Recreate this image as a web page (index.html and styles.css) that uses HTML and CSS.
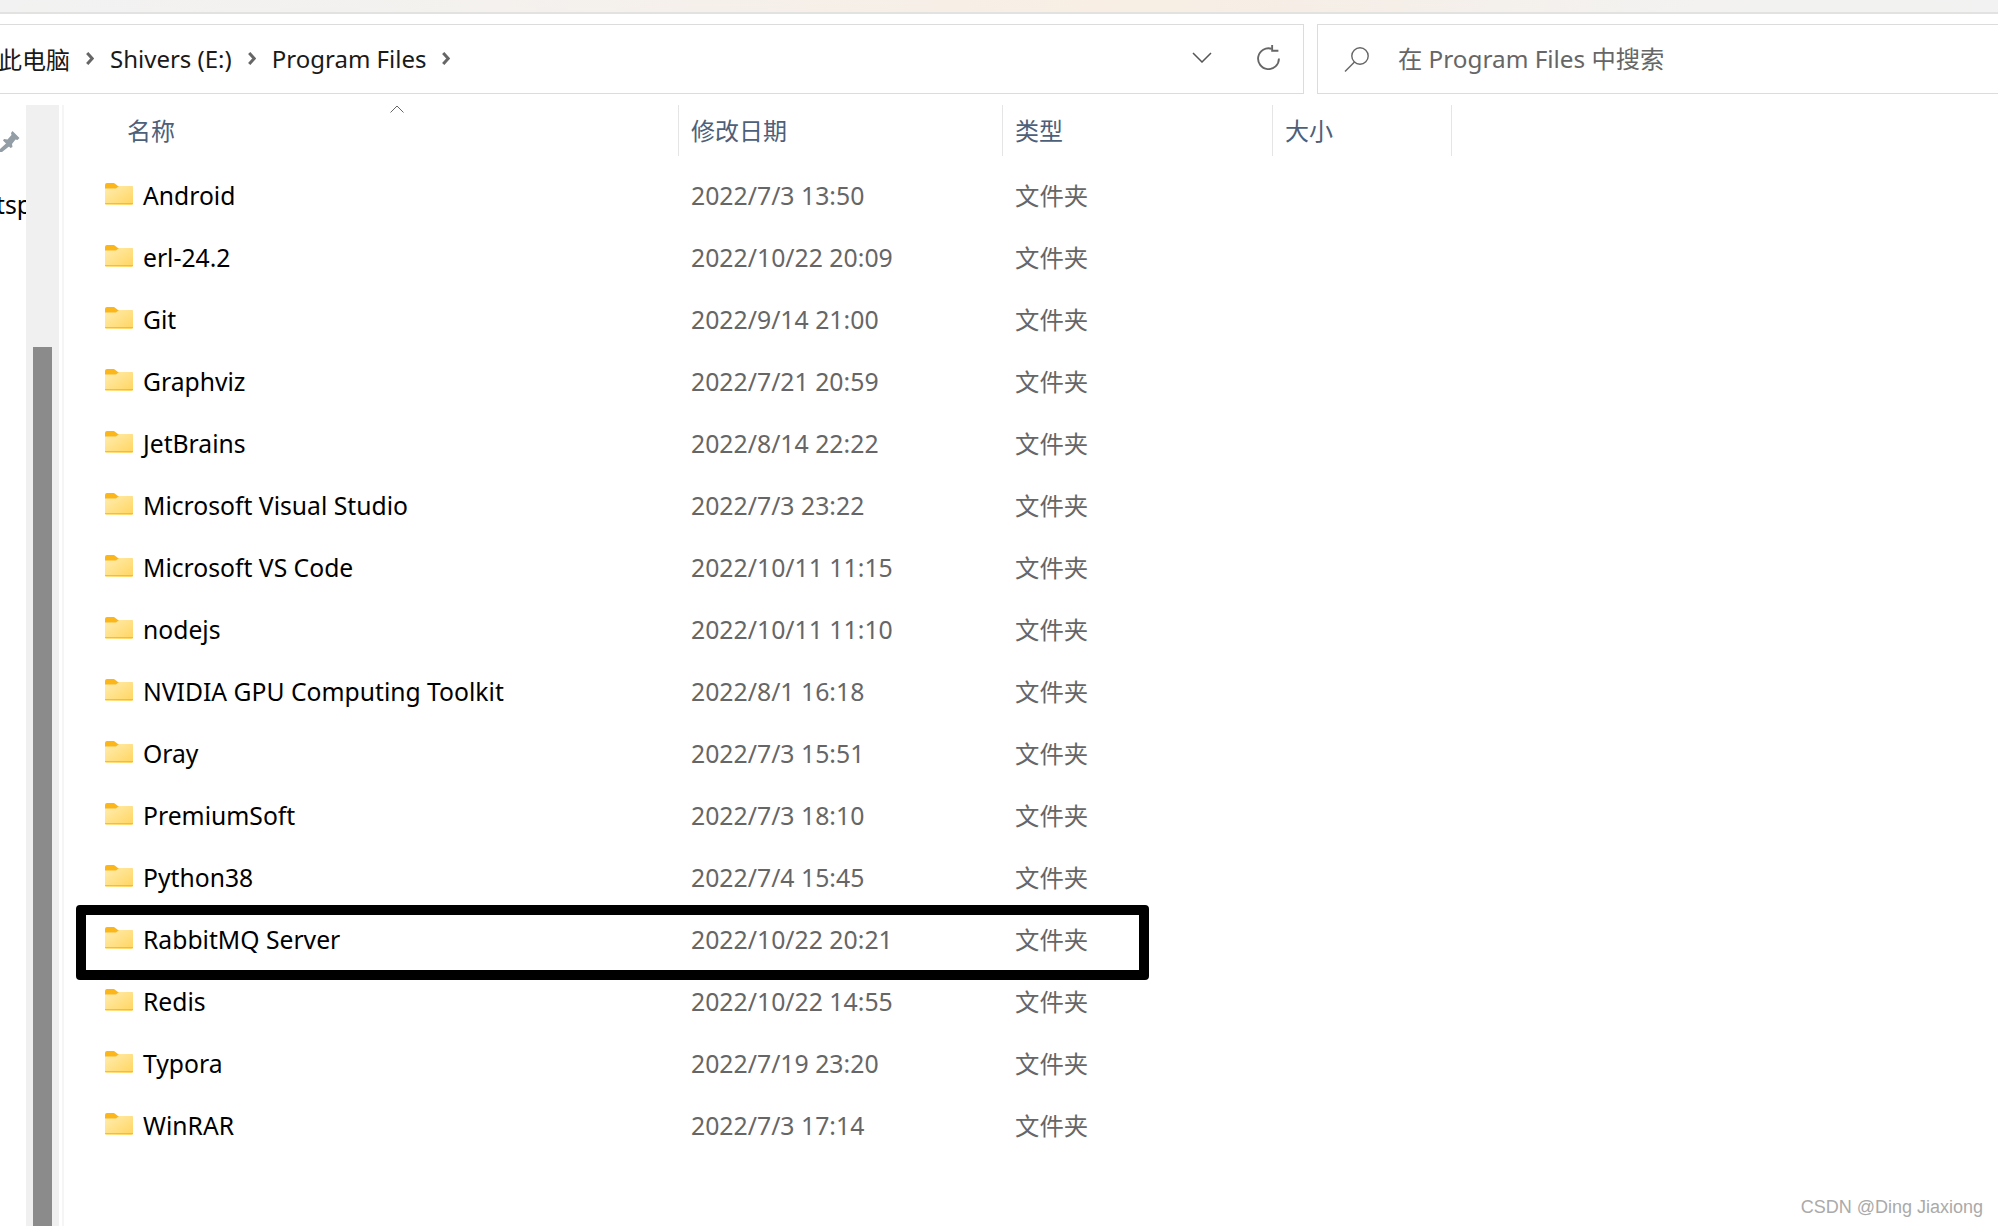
FILE: index.html
```html
<!DOCTYPE html>
<html lang="zh-CN">
  <head>
    <title>Program Files</title>
    <meta charset="utf-8">
    <link rel="stylesheet" href="styles.css">
  </head>
  <body>
    <svg class="defs" width="0" height="0">
      <defs>
        <linearGradient id="folderFill" x1="0" y1="0" x2="1" y2="1">
          <stop offset="0" stop-color="#ffedb0"/>
          <stop offset="1" stop-color="#ffd55f"/>
        </linearGradient>
        <symbol id="folder" viewBox="0 0 28 22">
          <path d="M0 2a2 2 0 0 1 2-2h7l4 3h13a2 2 0 0 1 2 2v5H0z" fill="#fbb61c"/>
          <path d="M0 5.500h11l3-2.500h12.500a1.500 1.500 0 0 1 1.500 1.500v16a1.500 1.500 0 0 1-1.500 1.500h-25a1.500 1.500 0 0 1-1.500-1.500z" fill="url(#folderFill)"/>
          <path d="M0 21h28v-.8H0z" fill="#f3b52a"/>
        </symbol>
        <symbol id="chev" viewBox="0 0 8 13">
          <path d="M1.200 1 6.200 6.500l-5 5.500" fill="none" stroke="#666" stroke-width="3"/>
        </symbol>
      </defs>
    </svg>

    <div class="titlebar"></div>

    <div class="toolbar">
      <div class="address">
        <div class="crumbs">
          <span>此电脑</span>
          <svg class="chev"><use href="#chev"/></svg>
          <span>Shivers (E:)</span>
          <svg class="chev"><use href="#chev"/></svg>
          <span>Program Files</span>
          <svg class="chev"><use href="#chev"/></svg>
        </div>
        <svg class="dropdown" viewBox="0 0 20 11"><path d="M1 1l9 9 9-9" fill="none" stroke="#555" stroke-width="1.500"/></svg>
        <svg class="refresh" viewBox="0 0 24 24"><path d="M15 3.600A10 10 0 1 0 22 13" fill="none" stroke="#666" stroke-width="1.800"/><path d="M15.500 0v5.500h6" fill="none" stroke="#666" stroke-width="1.800"/></svg>
      </div>
      <div class="search">
        <svg class="lens" viewBox="0 0 26 26"><circle cx="16" cy="10" r="8.200" fill="none" stroke="#666" stroke-width="1.400"/><path d="M10.500 16 1 25.500" stroke="#666" stroke-width="1.400"/></svg>
        <span>在 Program Files 中搜索</span>
      </div>
    </div>

    <div class="main">
      <div class="nav">
        <svg class="pin" viewBox="0 0 20 22"><path d="M12.500 1 19.500 8 17.500 10 15.500 9.500 12 14 12.500 17 10.500 18 3 10.500 4 9 7.500 9.500 11.500 5 11 3zM6 13.500 9 16.500 2 22H0V19z" fill="#929da5"/></svg>
        <div class="nav-text">tsp</div>
      </div>
      <div class="gutter"><div class="thumb"></div></div>

      <div class="list">
        <div class="head">
          <div class="col-name">名称<svg class="sort" viewBox="0 0 14 8"><path d="M.5 7.500 7 1l6.500 6.500" fill="none" stroke="#666" stroke-width="1"/></svg></div>
          <div class="col">修改日期</div>
          <div class="col">类型</div>
          <div class="col col-last">大小</div>
        </div>

        <div class="row"><div class="name"><svg class="folder"><use href="#folder"/></svg>Android</div><div class="date">2022/7/3 13:50</div><div class="type">文件夹</div></div>
        <div class="row"><div class="name"><svg class="folder"><use href="#folder"/></svg>erl-24.2</div><div class="date">2022/10/22 20:09</div><div class="type">文件夹</div></div>
        <div class="row"><div class="name"><svg class="folder"><use href="#folder"/></svg>Git</div><div class="date">2022/9/14 21:00</div><div class="type">文件夹</div></div>
        <div class="row"><div class="name"><svg class="folder"><use href="#folder"/></svg>Graphviz</div><div class="date">2022/7/21 20:59</div><div class="type">文件夹</div></div>
        <div class="row"><div class="name"><svg class="folder"><use href="#folder"/></svg>JetBrains</div><div class="date">2022/8/14 22:22</div><div class="type">文件夹</div></div>
        <div class="row"><div class="name"><svg class="folder"><use href="#folder"/></svg>Microsoft Visual Studio</div><div class="date">2022/7/3 23:22</div><div class="type">文件夹</div></div>
        <div class="row"><div class="name"><svg class="folder"><use href="#folder"/></svg>Microsoft VS Code</div><div class="date">2022/10/11 11:15</div><div class="type">文件夹</div></div>
        <div class="row"><div class="name"><svg class="folder"><use href="#folder"/></svg>nodejs</div><div class="date">2022/10/11 11:10</div><div class="type">文件夹</div></div>
        <div class="row"><div class="name"><svg class="folder"><use href="#folder"/></svg>NVIDIA GPU Computing Toolkit</div><div class="date">2022/8/1 16:18</div><div class="type">文件夹</div></div>
        <div class="row"><div class="name"><svg class="folder"><use href="#folder"/></svg>Oray</div><div class="date">2022/7/3 15:51</div><div class="type">文件夹</div></div>
        <div class="row"><div class="name"><svg class="folder"><use href="#folder"/></svg>PremiumSoft</div><div class="date">2022/7/3 18:10</div><div class="type">文件夹</div></div>
        <div class="row"><div class="name"><svg class="folder"><use href="#folder"/></svg>Python38</div><div class="date">2022/7/4 15:45</div><div class="type">文件夹</div></div>
        <div class="row"><div class="name"><svg class="folder"><use href="#folder"/></svg>RabbitMQ Server</div><div class="date">2022/10/22 20:21</div><div class="type">文件夹</div><div class="mark"></div></div>
        <div class="row"><div class="name"><svg class="folder"><use href="#folder"/></svg>Redis</div><div class="date">2022/10/22 14:55</div><div class="type">文件夹</div></div>
        <div class="row"><div class="name"><svg class="folder"><use href="#folder"/></svg>Typora</div><div class="date">2022/7/19 23:20</div><div class="type">文件夹</div></div>
        <div class="row"><div class="name"><svg class="folder"><use href="#folder"/></svg>WinRAR</div><div class="date">2022/7/3 17:14</div><div class="type">文件夹</div></div>
      </div>
    </div>

    <div class="watermark">CSDN @Ding Jiaxiong</div>
  </body>
</html>
```

FILE: styles.css
```css
html, body {
  height: 100%;
}
body {
  margin: 0;
  background: #fff;
  color: #000;
  font-family: "Noto Sans", "Noto Sans CJK SC", sans-serif;
  font-size: 24px;
  overflow: hidden;
}
.defs {
  position: absolute;
}

.titlebar {
  height: 12px;
  background: linear-gradient(90deg, #f2f2f2 0%, #f4f1ee 25%, #f8eee4 55%, #f6eee6 65%, #f3f2f1 85%, #f2f2f2 100%);
  border-bottom: 2px solid #e2e2e0;
}

.toolbar {
  display: flex;
  gap: 13px;
  height: 70px;
  margin-top: 10px;
}
.address {
  display: flex;
  align-items: center;
  width: 1306px;
  margin-left: -2px;
  box-sizing: border-box;
  border: 1px solid #dcdcdc;
  border-left: none;
}
.crumbs {
  display: flex;
  align-items: center;
  flex: 1;
  gap: 16px;
  margin-bottom: 2px;
  color: #1a1a1a;
}
.chev {
  width: 8px;
  height: 13px;
}
.dropdown {
  width: 20px;
  height: 11px;
  margin-right: 44px;
  margin-bottom: 4px;
}
.refresh {
  width: 25px;
  height: 25px;
  margin-right: 22px;
  margin-bottom: 4px;
}
.search {
  display: flex;
  align-items: center;
  flex: 1;
  margin-right: -2px;
  padding-left: 26px;
  padding-bottom: 4px;
  gap: 28px;
  border: 1px solid #dcdcdc;
  color: #666;
  font-size: 24.300px;
}
.lens {
  width: 26px;
  height: 26px;
  margin-top: 4px;
}

.main {
  display: flex;
  height: 1121px;
  margin-top: 11px;
}
.nav {
  width: 26px;
  overflow: hidden;
  padding-top: 25px;
}
.pin {
  display: block;
  width: 20px;
  height: 22px;
}
.nav-text {
  margin-top: 37px;
  margin-left: -4px;
  line-height: 32px;
  font-size: 24.700px;
  white-space: nowrap;
}
.gutter {
  display: flex;
  flex-direction: column;
  justify-content: flex-end;
  align-items: center;
  width: 33px;
  background: #f0f0f0;
  margin-right: 3px;
}
.thumb {
  width: 19px;
  height: 879px;
  background: #8b8b8b;
}

.list {
  flex: 1;
  border-left: 2px solid #f5f5f5;
}
.head, .row {
  display: grid;
  grid-template-columns: 614px 324px 270px 180px 1fr;
}
.head {
  height: 51px;
  margin-bottom: 9px;
  color: #4c607a;
}
.col-name {
  position: relative;
  padding-left: 63px;
  line-height: 51px;
}
.sort {
  position: absolute;
  left: 326px;
  top: 0;
  width: 14px;
  height: 8px;
}
.col {
  padding-left: 12px;
  line-height: 51px;
  border-left: 1px solid #e5e5e5;
}
.col-last {
  border-right: 1px solid #e5e5e5;
}

.row {
  position: relative;
  height: 62px;
  line-height: 62px;
}
.name {
  display: flex;
  align-items: center;
  padding-left: 41px;
  gap: 10px;
  font-size: 24.700px;
}
.folder {
  width: 28px;
  height: 22px;
  margin-top: -4px;
}
.date, .type {
  padding-left: 13px;
  color: #666;
}
.date {
  font-size: 24.800px;
  line-height: 60px;
}
.type {
  font-size: 24.400px;
}
.mark {
  position: absolute;
  left: 12px;
  top: -4px;
  width: 1073px;
  height: 75px;
  box-sizing: border-box;
  border: 10px solid #000;
  border-radius: 4px;
}

.watermark {
  position: absolute;
  right: 15px;
  bottom: 8px;
  font-family: "Liberation Sans", sans-serif;
  font-size: 18px;
  color: #aaa;
}
```
